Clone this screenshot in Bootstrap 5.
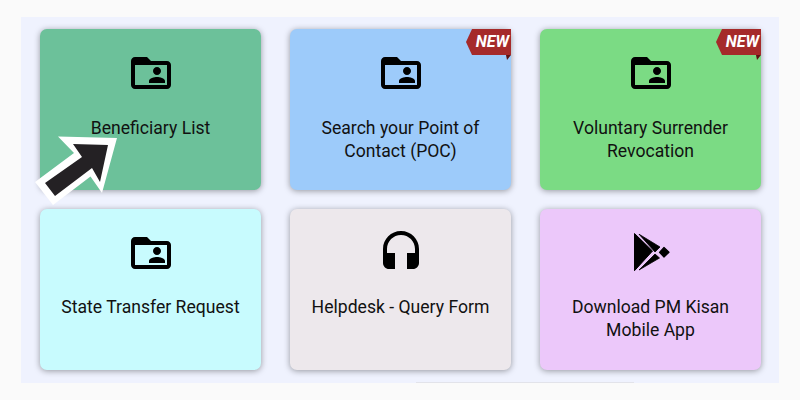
<!DOCTYPE html>
<html lang="en">
<head>
    <meta charset="UTF-8">
    <meta name="viewport" content="width=device-width, initial-scale=1.0">
    <title>Farmers Corner</title>
    <link rel="stylesheet" href="https://cdn.jsdelivr.net/npm/bootstrap@5.3.0/dist/css/bootstrap.min.css">
    <style>
        html, body { height: 400px; overflow: hidden; }
        body {
            font-family: Roboto, "Liberation Sans", sans-serif;
            background-color: #fafafa;
            padding: 17px 21px;
        }
        .tile-panel {
            position: relative;
            background-color: #eff2fe;
            height: 366px;
            padding: 12px 18px 13px 19px;
            display: grid;
            grid-template-columns: repeat(3, 221px);
            grid-template-rows: repeat(2, 161px);
            column-gap: 29px;
            row-gap: 19px;
        }
        .tile-panel::after {
            content: "";
            position: absolute;
            left: 395px;
            bottom: 0;
            width: 218px;
            height: 1px;
            background-color: #e2e3ea;
        }
        .tile {
            border: 0;
            border-radius: 7px;
            box-shadow: 0 1px 6px rgba(0, 0, 0, .38);
            padding: 20px 14px 0;
            color: #111;
            font-size: 17.6px;
            line-height: 23px;
            text-align: center;
        }
        .tile svg { display: block; margin: 0 auto 19px; }
        .tile:nth-child(-n+3) > svg { margin-bottom: 20px; }
        .tile-green { background-color: #6cc19a; }
        .tile-blue { background-color: #9dcbfa; }
        .tile-lime { background-color: #7bdb84; }
        .tile-cyan { background-color: #c8fbfe; }
        .tile-grey { background-color: #ede8ec; }
        .tile-purple { background-color: #ecc8fa; }
        .new-ribbon {
            position: absolute;
            top: 0;
            right: 0;
        }
        .new-ribbon svg { margin: 0; }
        .new-ribbon span {
            position: absolute;
            top: 2px;
            right: 2px;
            color: #fff;
            font-size: 16px;
            line-height: 22px;
            font-weight: 700;
            font-style: italic;
        }
        .pointer-arrow {
            position: absolute;
            left: 30px;
            top: 130px;
        }
    </style>
</head>
<body>

    <div class="tile-panel">
        <div class="card tile tile-green">
            <svg width="48" height="48" viewBox="0 0 24 24"><path fill-rule="evenodd" d="M20 6h-8l-2-2H4c-1.1 0-2 .9-2 2v12c0 1.1.9 2 2 2h16c1.1 0 2-.9 2-2V8c0-1.1-.9-2-2-2zm0 12H4V8h16v10z"/><path d="M15 13c1.1 0 2-.9 2-2s-.9-2-2-2-2 .9-2 2 .9 2 2 2zm-4 4h8v-1c0-1.33-2.67-2-4-2s-4 .67-4 2v1z"/></svg>
            Beneficiary List
        </div>
        <div class="card tile tile-blue">
            <svg width="48" height="48" viewBox="0 0 24 24"><path fill-rule="evenodd" d="M20 6h-8l-2-2H4c-1.1 0-2 .9-2 2v12c0 1.1.9 2 2 2h16c1.1 0 2-.9 2-2V8c0-1.1-.9-2-2-2zm0 12H4V8h16v10z"/><path d="M15 13c1.1 0 2-.9 2-2s-.9-2-2-2-2 .9-2 2 .9 2 2 2zm-4 4h8v-1c0-1.33-2.67-2-4-2s-4 .67-4 2v1z"/></svg>
            Search your Point of Contact (POC)
            <div class="new-ribbon">
                <svg width="45" height="32" viewBox="0 0 45 32"><polygon points="0,13 6,0 45,0 45,26 6,26" fill="#a52a2a"/><polygon points="40,26 45,26 41,31" fill="#5e1212"/></svg>
                <span>NEW</span>
            </div>
        </div>
        <div class="card tile tile-lime">
            <svg width="48" height="48" viewBox="0 0 24 24"><path fill-rule="evenodd" d="M20 6h-8l-2-2H4c-1.1 0-2 .9-2 2v12c0 1.1.9 2 2 2h16c1.1 0 2-.9 2-2V8c0-1.1-.9-2-2-2zm0 12H4V8h16v10z"/><path d="M15 13c1.1 0 2-.9 2-2s-.9-2-2-2-2 .9-2 2 .9 2 2 2zm-4 4h8v-1c0-1.33-2.67-2-4-2s-4 .67-4 2v1z"/></svg>
            Voluntary Surrender Revocation
            <div class="new-ribbon">
                <svg width="45" height="32" viewBox="0 0 45 32"><polygon points="0,13 6,0 45,0 45,26 6,26" fill="#a52a2a"/><polygon points="40,26 45,26 41,31" fill="#5e1212"/></svg>
                <span>NEW</span>
            </div>
        </div>
        <div class="card tile tile-cyan">
            <svg width="48" height="48" viewBox="0 0 24 24"><path fill-rule="evenodd" d="M20 6h-8l-2-2H4c-1.1 0-2 .9-2 2v12c0 1.1.9 2 2 2h16c1.1 0 2-.9 2-2V8c0-1.1-.9-2-2-2zm0 12H4V8h16v10z"/><path d="M15 13c1.1 0 2-.9 2-2s-.9-2-2-2-2 .9-2 2 .9 2 2 2zm-4 4h8v-1c0-1.33-2.67-2-4-2s-4 .67-4 2v1z"/></svg>
            State Transfer Request
        </div>
        <div class="card tile tile-grey">
            <svg width="48" height="48" viewBox="0 0 24 24"><path d="M12 1c-4.97 0-9 4.03-9 9v7c0 1.66 1.34 3 3 3h3v-8H5v-2c0-3.87 3.13-7 7-7s7 3.13 7 7v2h-4v8h3c1.66 0 3-1.34 3-3v-7c0-4.97-4.03-9-9-9z"/></svg>
            Helpdesk - Query Form
        </div>
        <div class="card tile tile-purple">
            <svg width="48" height="48" viewBox="0 0 48 48">
                <polygon points="7.5,4.5 25.5,22 7.5,41.7" stroke="#000" stroke-width="1" stroke-linejoin="round"/>
                <polygon points="12,5.2 33,18 28,23" stroke="#000" stroke-width=".8" stroke-linejoin="round"/>
                <polygon points="12,41 28,25 32.5,29" stroke="#000" stroke-width=".8" stroke-linejoin="round"/>
                <polygon points="37,18.5 42,23.3 37,28 32.5,23.3" stroke="#000" stroke-width="1.2" stroke-linejoin="round"/>
            </svg>
            Download PM Kisan Mobile App
        </div>
    </div>

    <svg class="pointer-arrow" width="95" height="85" viewBox="30 130 95 85">
        <polygon points="117,138 58,136.5 74,153 35,182 53,205 90.5,176.5 102,193" fill="#fff"/>
        <polygon points="108,145 73,144 82,157 45,183 55,196 92,168 100,182" fill="#242124"/>
    </svg>

</body>
</html>
